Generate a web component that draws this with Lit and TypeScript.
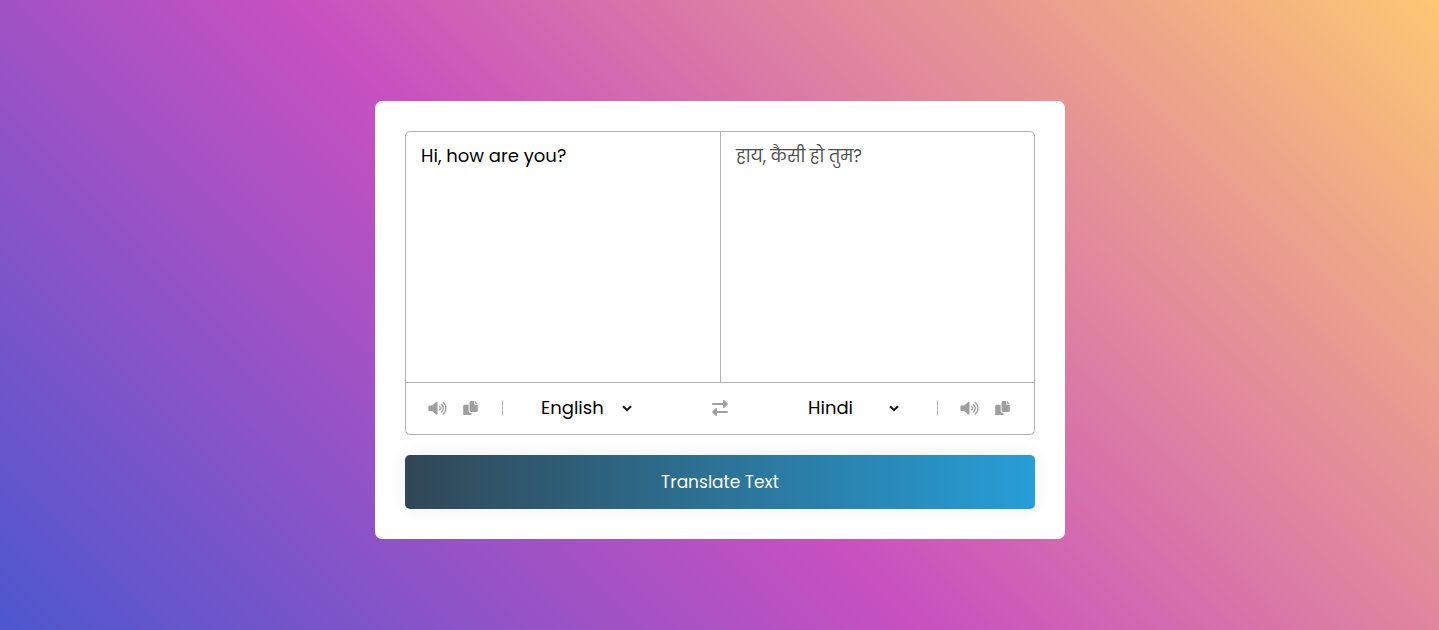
import { LitElement, html, css, svg } from "lit";
import { customElement } from "lit/decorators.js";

const volume = html`<svg class="volume" viewBox="0 0 640 512">${svg`<path d="M412.6 182c-10.28-8.334-25.41-6.867-33.75 3.402c-8.406 10.24-6.906 25.35 3.375 33.74C393.5 228.4 400 241.8 400 255.1c0 14.17-6.5 27.59-17.81 36.83c-10.28 8.396-11.78 23.5-3.375 33.74c4.719 5.806 11.62 8.802 18.56 8.802c5.344 0 10.75-1.779 15.19-5.399C435.1 311.5 448 284.6 448 255.1S435.1 200.4 412.6 182zM473.1 108.2c-10.22-8.334-25.34-6.898-33.78 3.34c-8.406 10.24-6.906 25.35 3.344 33.74C476.6 172.1 496 213.3 496 255.1s-19.44 82.1-53.31 110.7c-10.25 8.396-11.75 23.5-3.344 33.74c4.75 5.775 11.62 8.771 18.56 8.771c5.375 0 10.75-1.779 15.22-5.431C518.2 366.9 544 313 544 255.1S518.2 145 473.1 108.2zM534.4 33.4c-10.22-8.334-25.34-6.867-33.78 3.34c-8.406 10.24-6.906 25.35 3.344 33.74C559.9 116.3 592 183.9 592 255.1s-32.09 139.7-88.06 185.5c-10.25 8.396-11.75 23.5-3.344 33.74C505.3 481 512.2 484 519.2 484c5.375 0 10.75-1.779 15.22-5.431C601.5 423.6 640 342.5 640 255.1S601.5 88.34 534.4 33.4zM301.2 34.98c-11.5-5.181-25.01-3.076-34.43 5.29L131.8 160.1H48c-26.51 0-48 21.48-48 47.96v95.92c0 26.48 21.49 47.96 48 47.96h83.84l134.9 119.8C272.7 477 280.3 479.8 288 479.8c4.438 0 8.959-.9314 13.16-2.835C312.7 471.8 320 460.4 320 447.9V64.12C320 51.55 312.7 40.13 301.2 34.98z"/>`}</svg>`;
const copy = html`<svg class="copy" viewBox="0 0 512 512">${svg`<path d="M384 96L384 0h-112c-26.51 0-48 21.49-48 48v288c0 26.51 21.49 48 48 48H464c26.51 0 48-21.49 48-48V128h-95.1C398.4 128 384 113.6 384 96zM416 0v96h96L416 0zM192 352V128h-144c-26.51 0-48 21.49-48 48v288c0 26.51 21.49 48 48 48h192c26.51 0 48-21.49 48-48L288 416h-32C220.7 416 192 387.3 192 352z"/>`}</svg>`;
const exchange = html`<svg class="swap" viewBox="0 0 512 512">${svg`<path d="M32 160h319.9l.08 72c0 9.547 5.652 18.19 14.41 22c8.754 3.812 18.95 2.077 25.93-4.406l112-104c10.24-9.5 10.24-25.69 0-35.19l-112-104c-6.992-6.484-17.18-8.217-25.93-4.408c-8.758 3.816-14.41 12.46-14.41 22L351.9 96H32C14.31 96 0 110.3 0 128S14.31 160 32 160z"/><path transform="rotate(180 256 256)" d="M32 160h319.9l.08 72c0 9.547 5.652 18.19 14.41 22c8.754 3.812 18.95 2.077 25.93-4.406l112-104c10.24-9.5 10.24-25.69 0-35.19l-112-104c-6.992-6.484-17.18-8.217-25.93-4.408c-8.758 3.816-14.41 12.46-14.41 22L351.9 96H32C14.31 96 0 110.3 0 128S14.31 160 32 160z"/>`}</svg>`;
const chevron = html`<svg class="chevron" viewBox="0 0 10 7"><path d="M1 1.2 5 5.2 9 1.2" /></svg>`;

@customElement("app-root")
export class AppRoot extends LitElement {
  static styles = css`
    :host {
      display: flex;
      align-items: center;
      justify-content: center;
      box-sizing: border-box;
      height: 630px;
      padding-top: 10px;
      font-family: Poppins, Inter, "Noto Sans", sans-serif;
      background: linear-gradient(45deg, #4158d0 0%, #c850c0 46%, #ffcc70 100%) 0 -45px / 100% 770px;
    }
    * { box-sizing: border-box; }
    svg { display: block; flex: none; fill: #9f9f9f; }
    .card {
      width: 690px;
      height: 438px;
      padding: 30px;
      border-radius: 7px;
      background: #fff;
    }
    .wrapper { height: 304px; border: 1px solid #b3b3b3; border-radius: 5px; }
    .texts {
      display: grid;
      grid-template-columns: 314px 314px;
      height: 251px;
      border-bottom: 1px solid #b3b3b3;
    }
    .text {
      padding: 10px 15px;
      font-size: 18px;
      line-height: 28px;
      white-space: nowrap;
    }
    .from { padding-left: 15.5px; }
    .to { padding-left: 15.5px; border-left: 1px solid #b3b3b3; color: #4d4d4d; }
    .hindi { display: inline-block; transform: scaleX(0.92); transform-origin: 0 50%; }
    .controls {
      display: grid;
      grid-template-columns: 97px 1fr 16px 1fr 97px;
      align-items: center;
      height: 50px;
    }
    .icons { display: flex; align-items: center; height: 14px; }
    .icons.left { padding-left: 22.5px; border-right: 1px solid #b3b3b3; }
    .icons.right { padding-left: 22.5px; border-left: 1px solid #b3b3b3; }
    .volume { width: 19px; height: 14.6px; margin-right: 16px; }
    .copy { width: 15px; height: 14.6px; }
    .swap { width: 16px; height: 16px; }
    .select {
      display: flex;
      align-items: center;
      justify-content: space-between;
      width: 91px;
      font-size: 18px;
      line-height: 28px;
    }
    .select.source { margin-left: 38px; }
    .select.target { margin-left: 80px; }
    .chevron { width: 10px; height: 7px; fill: none; stroke: #111; stroke-width: 2; }
    .source span { margin-left: 0.5px; }
    .target span { margin-left: 0.5px; }
    .button {
      display: block;
      width: 100%;
      height: 54px;
      margin-top: 20px;
      padding: 0 0 0 1px;
      border: 0;
      border-radius: 5px;
      font: inherit;
      font-size: 17px;
      color: #fff;
      background: linear-gradient(to right, #314755 0%, #26a0da 51%, #314755 100%) 0 0 / 200% auto;
      box-shadow: 0 0 20px #eee;
    }
  `;

  render() {
    return html`
      <main class="card">
        <section class="wrapper">
          <div class="texts">
            <div class="text from">Hi, how are you?</div>
            <div class="text to" lang="hi"><span class="hindi">हाय, कैसी हो तुम?</span></div>
          </div>
          <div class="controls">
            <div class="icons left">${volume}${copy}</div>
            <div class="select source"><span>English</span>${chevron}</div>
            ${exchange}
            <div class="select target"><span>Hindi</span>${chevron}</div>
            <div class="icons right">${volume}${copy}</div>
          </div>
        </section>
        <button class="button">Translate Text</button>
      </main>
    `;
  }
}
